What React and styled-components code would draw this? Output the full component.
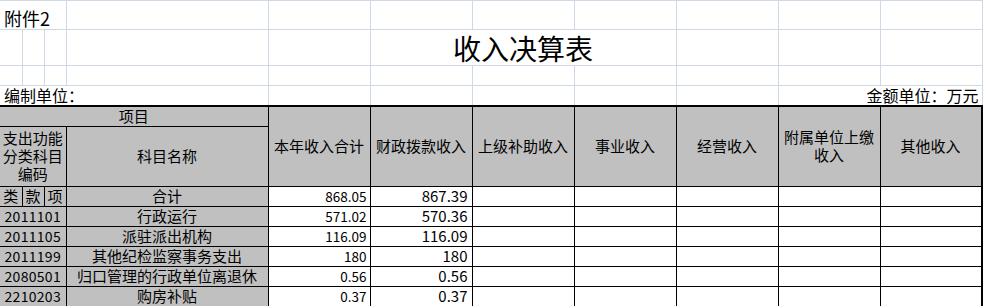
import styled, { createGlobalStyle } from 'styled-components'

const GlobalStyle = createGlobalStyle`
  html, body {
    margin: 0;
    padding: 0;
    background: #fff;
  }
  body {
    font-family: "Noto Sans CJK SC", "Liberation Sans", sans-serif;
    color: #000;
  }
`

const GRID = '#d0d7e5'
const GRAY = '#c0c0c0'

const Sheet = styled.table`
  border-collapse: collapse;
  table-layout: fixed;
  width: 983px;
  td {
    padding: 0;
    white-space: nowrap;
  }
`

const Row = styled.tr`
  height: ${p => p.$h}px;
`

/* top area: plain spreadsheet cells with light gridlines */
const GridCell = styled.td`
  border: 1px solid ${GRID};
  border-left: ${p => (p.$first ? 'none' : `1px solid ${GRID}`)};
  vertical-align: bottom;
  text-align: ${p => p.$align || 'left'};
  font-size: ${p => p.$size || 16}px;
  line-height: ${p => (p.$size || 16) + 3}px;
  padding: ${p => (p.$align === 'right' ? '0 3px 0 0' : '0 0 0 4px')} !important;
`

const Title = styled.td`
  border: 1px solid ${GRID};
  text-align: center;
  vertical-align: middle;
  font-size: 28px;
  line-height: 34px;
  padding-top: 1px !important;
`

/* report table */
const Head = styled.td`
  background: ${GRAY};
  border: 1px solid #000;
  border-left: ${p => (p.$first ? 'none' : '1px solid #000')};
  border-top: ${p => (p.$top ? '2px solid #000' : '1px solid #000')};
  border-right: ${p => (p.$last ? '3px solid #000' : '1px solid #000')};
  text-align: center;
  vertical-align: middle;
  font-size: 15px;
  line-height: 18px;
  white-space: normal !important;
`

const Code = styled(Head)`
  font-size: 14px;
  font-variant-numeric: tabular-nums;
  letter-spacing: 0.3px;
`

const Value = styled.td`
  border: 1px solid #000;
  border-right: ${p => (p.$last ? '3px solid #000' : '1px solid #000')};
  text-align: right;
  vertical-align: middle;
  font-size: ${p => p.$size || 15}px;
  line-height: 18px;
  padding-right: ${p => p.$pad || 3}px !important;
  font-variant-numeric: tabular-nums;
`

const widths = [22, 22, 22, 202, 102, 102, 102, 102, 102, 102, 102]

const columns = ['本年收入合计', '财政拨款收入', '上级补助收入', '事业收入', '经营收入', '附属单位上缴收入', '其他收入']

const rows = [
  { code: '2011101', name: '行政运行', total: '571.02', fiscal: '570.36' },
  { code: '2011105', name: '派驻派出机构', total: '116.09', fiscal: '116.09' },
  { code: '2011199', name: '其他纪检监察事务支出', total: '180', fiscal: '180' },
  { code: '2080501', name: '归口管理的行政单位离退休', total: '0.56', fiscal: '0.56' },
  { code: '2210203', name: '购房补贴', total: '0.37', fiscal: '0.37' },
]

function Amounts({ total, fiscal }) {
  return (
    <>
      <Value $size={13.5} $pad={3}>{total}</Value>
      <Value $pad={4}>{fiscal}</Value>
      {[0, 1, 2, 3, 4].map(i => (
        <Value key={i} $last={i === 4} />
      ))}
    </>
  )
}

export default function App() {
  return (
    <>
      <GlobalStyle />
      <Sheet>
        <colgroup>
          {widths.map((w, i) => (
            <col key={i} style={{ width: w }} />
          ))}
        </colgroup>
        <tbody>
          <Row $h={29}>
            <GridCell colSpan={3} $first $size={18}>附件2</GridCell>
            {widths.slice(3).map((_, i) => <GridCell key={i} />)}
          </Row>
          <Row $h={36}>
            <GridCell $first />
            <GridCell />
            <GridCell />
            <GridCell />
            <GridCell />
            <Title colSpan={3}>收入决算表</Title>
            <GridCell />
            <GridCell />
            <GridCell />
          </Row>
          <Row $h={20}>
            <GridCell $first />
            {widths.slice(1).map((_, i) => <GridCell key={i} />)}
          </Row>
          <Row $h={20}>
            <GridCell colSpan={4} $first>编制单位：</GridCell>
            <GridCell />
            <GridCell />
            <GridCell />
            <GridCell />
            <GridCell />
            <GridCell colSpan={2} $align="right">金额单位：万元</GridCell>
          </Row>

          <Row $h={20}>
            <Head colSpan={4} $first $top>项目</Head>
            {columns.map((c, i) => (
              <Head key={c} rowSpan={2} $top $last={i === columns.length - 1}>{c}</Head>
            ))}
          </Row>
          <Row $h={60}>
            <Head colSpan={3} $first>支出功能<br />分类科目<br />编码</Head>
            <Head>科目名称</Head>
          </Row>
          <Row $h={20}>
            <Head $first>类</Head>
            <Head>款</Head>
            <Head>项</Head>
            <Head>合计</Head>
            <Amounts total="868.05" fiscal="867.39" />
          </Row>
          {rows.map(r => (
            <Row key={r.code} $h={20}>
              <Code colSpan={3} $first>{r.code}</Code>
              <Head>{r.name}</Head>
              <Amounts total={r.total} fiscal={r.fiscal} />
            </Row>
          ))}
        </tbody>
      </Sheet>
    </>
  )
}
